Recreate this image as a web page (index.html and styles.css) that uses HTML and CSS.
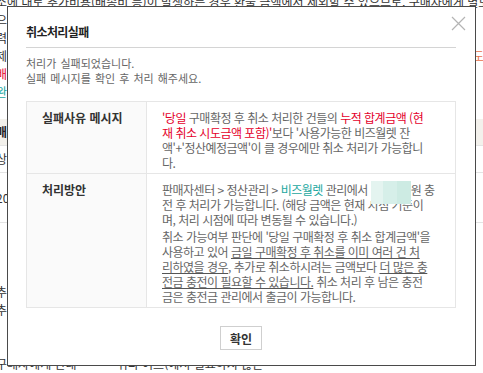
FILE: index.html
```html
<!DOCTYPE html>
<html lang="ko">
<head>
  <meta charset="UTF-8">
  <title>취소처리실패</title>
  <link rel="stylesheet" href="styles.css">
</head>
<body>
  <div class="page">
    <p class="bg-line first">소에 대로 추가비용(배송비 등)이 발생하는 경우 환불 금액에서 제외할 수 있으므로, 구매자에게 별도로 안내해 주세요.</p>
    <p class="bg-line">으로 처리됩니다.</p>
    <p class="bg-line">력 후 처리해 주세요.</p>
    <p class="bg-line split"><span>제 처리 후 철회할 수 없습니다.</span><span class="orange">도</span></p>
    <p class="bg-line red">배송비 환불 안내</p>
    <p class="bg-line teal">완료 처리</p>
    <div class="bg-table">
      <div class="bg-row head"><span>매출 정보</span></div>
      <div class="bg-row"><span>상품명</span></div>
      <div class="bg-row tall"><span>2023</span></div>
      <div class="bg-row tall2"><span>추가</span><span>추가</span></div>
    </div>
    <p class="bg-foot"><span>구매자에게 안내</span><span>취다 어르(에서 필요하지 않은</span></p>
  </div>

  <div class="modal">
    <button class="close" type="button" aria-label="닫기">
      <svg width="15" height="15" viewBox="0 0 15 15"><path d="M1 1L14 14M14 1L1 14" stroke="#b4b4b4" stroke-width="1.2" fill="none"/></svg>
    </button>
    <h2 class="modal-title">취소처리실패</h2>
    <p class="modal-desc">처리가 실패되었습니다.<br>실패 메시지를 확인 후 처리 해주세요.</p>
    <table class="result">
      <colgroup>
        <col class="col-head">
        <col>
      </colgroup>
      <tr>
        <th>실패사유 메시지</th>
        <td>
          <p><span class="red">'당일</span> 구매확정 후 취소 처리한 건들의 <span class="red">누적 합계금액 (현<br>재 취소 시도금액 포함)'</span>보다 '사용가능한 비즈월렛 잔<br>액'+'정산예정금액'이 클 경우에만 취소 처리가 가능합니<br>다.</p>
        </td>
      </tr>
      <tr>
        <th>처리방안</th>
        <td>
          <p>판매자센터 &gt; 정산관리 &gt; <span class="teal">비즈월렛</span> 관리에서 <span class="masked"></span>원 충<br>전 후 처리가 가능합니다. (해당 금액은 현재 시점 기준이<br>며, 처리 시점에 따라 변동될 수 있습니다.)</p>
          <p>취소 가능여부 판단에 '당일 구매확정 후 취소 합계금액'을<br>사용하고 있어 <u>금일 구매확정 후 취소를 이미 여러 건 처<br>리하였을 경우</u>, 추가로 취소하시려는 금액보다 <u>더 많은 충<br>전금 충전이 필요할 수 있습니다.</u> 취소 처리 후 남은 충전<br>금은 충전금 관리에서 출금이 가능합니다.</p>
        </td>
      </tr>
    </table>
    <div class="actions">
      <button class="btn" type="button">확인</button>
    </div>
  </div>
</body>
</html>
```

FILE: styles.css
```css
body {
  margin: 0;
  background-color: #fff;
  font-family: "Noto Sans CJK KR", "Noto Sans", sans-serif;
  font-size: 12px;
  color: #333;
  overflow: hidden;
  height: 373px;
}
.page {
  margin-left: -4px;
  width: 500px;
  white-space: nowrap;
  overflow: hidden;
}
.bg-line {
  margin: 0;
  height: 18px;
  line-height: 18px;
}
.bg-line.first {
  margin-top: -7px;
}
.split {
  display: flex;
  justify-content: space-between;
}
.orange {
  color: #e8714a;
  padding-right: 12px;
}
.red {
  color: #e4002b;
}
.teal {
  color: #1aa7a0;
}
.bg-table {
  margin-top: 18px;
}
.bg-row {
  height: 26px;
  line-height: 26px;
  border-bottom: 1px solid #e4e4e4;
  display: flex;
  flex-direction: column;
}
.bg-row.head {
  font-weight: bold;
  color: #222;
  background-color: #f3f1ec;
}
.bg-row.tall {
  height: 49px;
  justify-content: center;
}
.bg-row.tall2 {
  height: 126px;
  line-height: 18px;
  justify-content: flex-end;
  padding-bottom: 30px;
  box-sizing: border-box;
  border-bottom: none;
}
.bg-foot {
  margin: 6px 0 0;
  display: flex;
  gap: 40px;
  line-height: 18px;
}

.modal {
  position: absolute;
  top: 6px;
  left: 7px;
  width: 469px;
  height: 360px;
  box-sizing: border-box;
  border: 1px solid #4a4a4a;
  background-color: #fff;
  padding: 0 19px 0 18px;
}
.close {
  position: absolute;
  top: 9px;
  right: 9px;
  width: 15px;
  height: 15px;
  padding: 0;
  border: none;
  background: none;
}
.close svg {
  display: block;
}
.modal-title {
  margin: 0;
  padding: 17px 0 7px;
  font-size: 12px;
  line-height: 16px;
  color: #222;
  letter-spacing: -0.6px;
  border-bottom: 1px solid #d4d4d4;
}
.modal-desc {
  margin: 8px 0 15px;
  font-size: 11px;
  line-height: 15px;
  color: #666;
  word-spacing: 1px;
}
.result {
  width: 100%;
  table-layout: fixed;
  border-collapse: collapse;
  border: 1px solid #e6e6e6;
}
.col-head {
  width: 120px;
}
.result th,
.result td {
  border-bottom: 1px solid #e6e6e6;
  padding: 8px 15px 3px;
  vertical-align: top;
  text-align: left;
  line-height: 15px;
  white-space: nowrap;
}
.result th {
  background-color: #fafafa;
  border-right: 1px solid #e6e6e6;
  color: #333;
}
.result td {
  color: #666;
  letter-spacing: -0.5px;
}
.result p {
  margin: 0 0 2px;
}
.result p:last-child {
  margin-bottom: 0;
}
.result u {
  text-decoration-color: #555;
}
.masked {
  display: inline-block;
  position: relative;
  width: 40px;
  height: 0;
}
.masked::after {
  content: "";
  position: absolute;
  left: 0;
  top: -14px;
  width: 40px;
  height: 23px;
  background:
    linear-gradient(90deg, #e4f4f0 0 12px, #d6efe9 12px 26px, #cdebe3 26px 40px);
}
.actions {
  display: flex;
  justify-content: center;
  margin-top: 18px;
}
.btn {
  width: 42px;
  height: 24px;
  padding: 0;
  border: 1px solid #cfcfcf;
  background-color: #fff;
  font-family: inherit;
  font-size: 12px;
  font-weight: bold;
  color: #333;
}
```
